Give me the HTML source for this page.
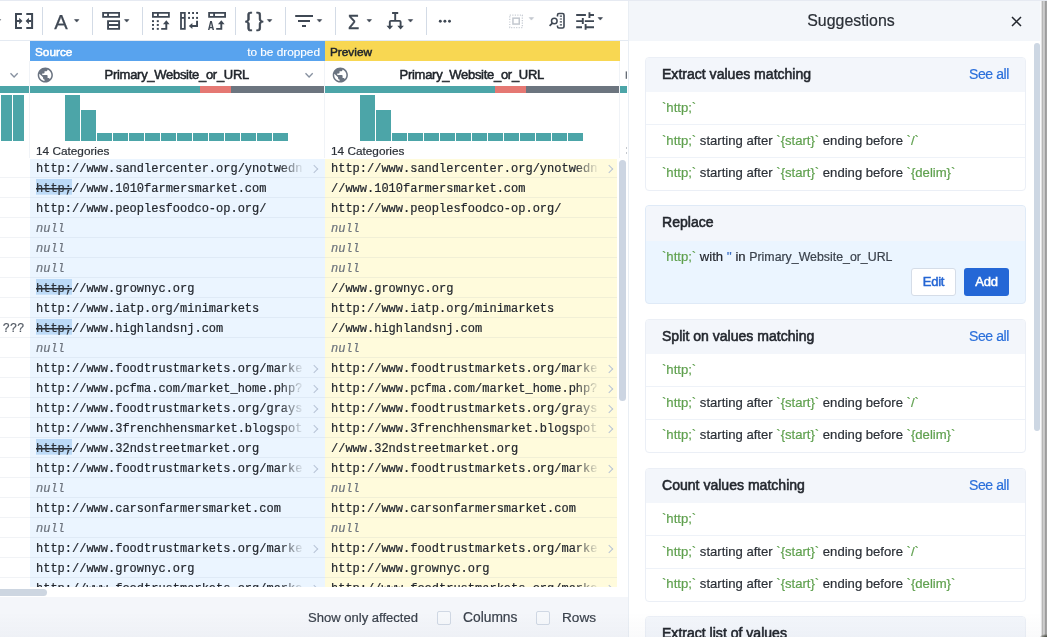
<!DOCTYPE html>
<html lang="en">
<head>
<meta charset="utf-8">
<title>Suggestions</title>
<style>
*{box-sizing:border-box;margin:0;padding:0}
html,body{width:1047px;height:637px;overflow:hidden;background:#fff}
body{position:relative;font-family:"Liberation Sans",sans-serif;color:#2b3037;-webkit-font-smoothing:antialiased}
.abs{position:absolute}
#left,#right{will-change:transform}
#left{position:absolute;left:0;top:0;width:628px;height:637px;overflow:hidden;background:#fff}
#topline{position:absolute;left:0;top:0;width:1047px;height:1px;background:#e6eaf2;z-index:5}
#toolbar{position:absolute;left:0;top:0;width:628px;height:41px;background:#fff;border-bottom:1px solid #e4eaf2}
.sep{position:absolute;top:7px;width:1px;height:28px;background:#d3dbe6}
.ico{position:absolute;overflow:visible}
.caret{position:absolute;width:0;height:0;border-left:2.8px solid transparent;border-right:2.8px solid transparent;border-top:3.2px solid #39424e}
.caret.gray{border-top-color:#c3c8cf}
.tb-t{position:absolute;color:#3f4854;white-space:nowrap}
/* header bands */
.band{position:absolute;top:41px;height:20px;font-size:11.8px;line-height:22px}
.band .l{-webkit-text-stroke:0.5px currentColor}
.band .r{-webkit-text-stroke:0.15px currentColor}
#bsrc{left:30px;width:295px;background:#58a3ee;color:#fff}
#bprv{left:325px;width:295px;background:#f8d752;color:#20252b}
.band .r{position:absolute;right:5px;top:0;font-weight:normal}
.band .l{position:absolute;left:5px;top:0}
/* column header */
.colname{position:absolute;top:61px;height:26px;line-height:28px;font-size:13px;letter-spacing:-0.29px;-webkit-text-stroke:0.5px currentColor;color:#20252b;text-align:center}
.vline{position:absolute;width:1px;background:#f0f3f7}
.qbar{position:absolute;top:86.3px;height:6.5px}
.bar{position:absolute;background:#4ca5a8}
.histo{position:absolute;top:95px;height:46px}
.cats{position:absolute;top:144px;font-size:11.8px;line-height:14px;color:#2b3037;-webkit-text-stroke:0.2px currentColor}
/* rows */
.col{position:absolute;top:158px;height:429px;overflow:hidden}
.cell{position:relative;height:20px;border-bottom:1px solid rgba(120,140,170,0.10);font-family:"Liberation Mono",monospace;font-size:12px;line-height:23px;white-space:nowrap;overflow:hidden;color:#23272e;padding-left:6px;-webkit-text-stroke:0.2px currentColor}
#csrc{left:30px;width:295px;background:#ebf5ff}
#cprv{left:325px;width:292px;background:#fffbdc}
#cleft{left:0;width:30px;background:#fff}
.cell.lc{padding-left:0;text-indent:-4.4px;color:#555c66}
.null{font-style:italic;color:#6c737d}
.tx{display:inline-block}
.tx.tr{max-width:266.4px;overflow:hidden;vertical-align:top}
.hl{color:#2b3037;padding-top:3.4px;background:linear-gradient(#2b3037,#2b3037) no-repeat 0 9.1px / 100% 1.5px,linear-gradient(#bcdaf7,#bcdaf7) no-repeat 0 0 / 100% 15.7px}
.hl s{text-decoration:none}
.fade{position:absolute;left:250px;top:0;width:23px;height:19px}
#rowtop{position:absolute;left:0;top:158px;width:628px;height:1px;background:#fff}
#csrc .fade{background:linear-gradient(to right,rgba(235,245,255,0),rgba(235,245,255,0.95))}
#cprv .fade{background:linear-gradient(to right,rgba(255,251,220,0),rgba(255,251,220,0.95))}
.chev{position:absolute;left:280.6px;top:8px;width:6.2px;height:6.2px;border-top:1.5px solid #b7c3d6;border-right:1.5px solid #b7c3d6;transform:rotate(45deg)}
/* bottom */
#hscroll{position:absolute;left:0;top:586.7px;width:628px;height:10px;background:#fff}
#hthumb{position:absolute;left:0;top:588.7px;width:47px;height:7.2px;border-radius:0 4px 4px 0;background:#cdd6e1}
#bottom{position:absolute;left:0;top:596.7px;width:628px;height:41px;background:#f4f6fa}
#bottom span{position:absolute;top:0;line-height:41px;font-size:13.05px;color:#3b424c;-webkit-text-stroke:0.2px currentColor}
.cb{position:absolute;top:611px;width:14px;height:14px;border:1px solid #d0d8e4;border-radius:2px;background:#f6f8fb}
#vthumb{position:absolute;left:619px;top:160px;width:7px;height:241px;border-radius:4px;background:#ccd5e2}
/* right panel */
#right{position:absolute;left:628px;top:0;width:419px;height:637px;background:#fff;border-left:1px solid #e9eef4;overflow:hidden}
#rhead{position:absolute;left:0;top:0;width:419px;height:41px;background:#f3f6fa}
#rhead .t{position:absolute;left:0;width:444px;top:0;line-height:41px;text-align:center;font-size:15.9px;color:#2b3037;-webkit-text-stroke:0.2px currentColor}
.card{position:absolute;left:16px;width:381px;height:134px;border:1px solid #ebeff6;border-radius:4px;background:#fff;overflow:hidden}
.chead{height:34px;background:#f3f6fb;position:relative}
.ctitle{position:absolute;left:16px;top:0;line-height:33px;font-size:14.05px;-webkit-text-stroke:0.55px currentColor;color:#23272e}
.seeall{position:absolute;right:16px;top:0;line-height:32px;font-size:14px;letter-spacing:-0.4px;color:#2a6fdb;-webkit-text-stroke:0.2px currentColor}
.crow{height:33px;line-height:32px;padding-left:16px;font-size:13.1px;color:#2b3037;border-top:1px solid #eef2f8;white-space:nowrap;-webkit-text-stroke:0.2px currentColor}
.crow:nth-child(2){border-top:none;height:32px}
.crow:nth-child(3){line-height:31px}
.crow:nth-child(4){line-height:30px}
.g{color:#5fa04e}
.btn{position:absolute;top:62px;height:28px;width:45px;border-radius:3px;font-size:13px;letter-spacing:-0.25px;-webkit-text-stroke:0.5px currentColor;line-height:25px;text-align:center}
#rthumb{position:absolute;left:405px;top:43px;width:6px;height:388px;border-radius:4px;background:#cdd7e3}
#redge{position:absolute;left:1040px;top:0;width:7px;height:637px;background:linear-gradient(to right,#f9fafc 0,#f9fafc 1px,#e0e0e0 1px,#e0e0e0 2px,#b6b6b6 2px,#b6b6b6 3px,#cdcdcd 3px,#cdcdcd 4px,#c6c6c6 4px,#c6c6c6 5px,#9c9c9c 5px,#9c9c9c 6px,#a4a4a4 6px)}
#botfade{position:absolute;left:0;top:612px;width:1042px;height:25px;background:linear-gradient(to bottom,rgba(20,40,80,0),rgba(20,40,80,0.022))}
#corner{position:absolute;left:1040px;top:633.5px;width:7px;height:3.5px;background:radial-gradient(ellipse at 100% 100%,#3e4238 0,#6f716a 35%,rgba(170,170,170,0) 75%)}
</style>
</head>
<body>
<div id="left">
  <div id="toolbar">
    <svg class="ico" style="left:0;top:0" width="628" height="41" viewBox="0 0 628 41" fill="none" stroke="#3f4854" stroke-width="2">
  <!-- merge -->
  <path d="M21.9 14 H16 V28 H21.9 M26.3 14 H32.1 V28 H26.3" stroke-width="2"/>
  <path d="M16.8 21 H19.8 M31.2 21 H28.4" stroke-width="1.9"/>
  <path d="M19.2 17.7 L22.5 21 L19.2 24.3 Z M28.9 17.7 L25.6 21 L28.9 24.3 Z" fill="#3f4854" stroke="none"/>
  <!-- table dropdown -->
  <path d="M103.1 12.9 H119.1 V16.9 H103.1 Z M108.05 12.9 V16.9" stroke-width="1.8"/>
  <path d="M108.05 21.1 H119.1 V28.9 H108.05 Z M108 25 H119" stroke-width="1.9"/>
  <!-- icon 1: header + dots + arrow -->
  <path d="M152.9 12.9 H168.9 V16.9 H152.9 Z M157.9 12.9 V16.9" stroke-width="1.8"/>
  <g fill="#3f4854" stroke="none">
    <rect x="152" y="20.2" width="2" height="1.9"/><rect x="156.8" y="20.2" width="2" height="1.9"/>
    <rect x="152" y="24" width="2" height="1.9"/><rect x="156.8" y="24" width="2" height="1.9"/>
    <rect x="152" y="27.9" width="2" height="1.9"/><rect x="156.8" y="27.9" width="2" height="1.9"/>
  </g>
  <path d="M161.2 28.9 H166.3 V23" stroke-width="1.9"/>
  <path d="M163 24.2 L166.3 20.3 L169.6 24.2 Z" fill="#3f4854" stroke="none"/>
  <!-- icon 2: column + dots + return -->
  <path d="M181 12.9 H184.8 V28.9 H181 Z M181 17.8 H184.8" stroke-width="1.8"/>
  <g fill="#3f4854" stroke="none">
    <rect x="188.1" y="12" width="1.9" height="2"/><rect x="192.1" y="12" width="1.9" height="2"/><rect x="196.1" y="12" width="1.9" height="2"/>
    <rect x="188.1" y="16.9" width="1.9" height="2"/><rect x="192.1" y="16.9" width="1.9" height="2"/><rect x="196.1" y="16.9" width="1.9" height="2"/>
  </g>
  <path d="M197.05 20.8 V26 H191.6" stroke-width="1.9"/>
  <path d="M192.4 22.9 L188.8 26 L192.4 29.1 Z" fill="#3f4854" stroke="none"/>
  <!-- icon 3: header + A + arrow -->
  <path d="M209.1 12.9 H225.1 V16.9 H209.1 Z M214.1 12.9 V16.9" stroke-width="1.8"/>
  <path d="M216.2 28.9 H221.3 V23" stroke-width="1.9"/>
  <path d="M218 24.2 L221.3 20.3 L224.6 24.2 Z" fill="#3f4854" stroke="none"/>
  <!-- filter -->
  <path d="M295.2 16 H313 M298 21 H310 M302 26 H306" stroke-width="2"/>
  <!-- pivot -->
  <path d="M392.1 13 H398.2 M395.2 13 V20.9 M389.8 27 V22 Q389.8 20.9 390.9 20.9 H399.5 Q400.6 20.9 400.6 22 V27" stroke-width="1.9"/>
  <path d="M386.5 25.7 H393.1 L389.8 29.5 Z M397.3 25.7 H403.9 L400.6 29.5 Z" fill="#3f4854" stroke="none"/>
  <!-- dots -->
  <g fill="#3f4854" stroke="none"><circle cx="440.3" cy="21.3" r="1.45"/><circle cx="444.9" cy="21.3" r="1.45"/><circle cx="449.5" cy="21.3" r="1.45"/></g>
  <!-- dotted square (disabled) -->
  <rect x="509.75" y="15.05" width="12.6" height="12.5" stroke="#c9ced5" stroke-width="1.3" stroke-dasharray="1.2 1.31"/>
  <rect x="512.95" y="18.15" width="6.3" height="5.9" stroke="#c3c8cf" stroke-width="1.5"/>
  <!-- search doc -->
  <path d="M557.5 16.5 V15 Q557.5 13.5 559 13.5 H562.5 Q564 13.5 564 15 V26.5 Q564 28 562.5 28 H559 Q557.5 28 557.5 26.5 V25.4" stroke-width="1.6"/>
  <path d="M559.8 16.1 H562 M559.8 19 H562 M559.8 21.9 H562 M559.8 24.8 H562" stroke-width="1.2"/>
  <circle cx="554.3" cy="21" r="2.8" stroke-width="1.5" fill="#fff"/>
  <path d="M552.4 23.1 L549.6 25.9" stroke-width="1.7"/>
  <!-- sliders -->
  <path d="M576.2 15.05 H585.9 M589.45 12.2 V18 M590 15.05 H594" stroke-width="1.9"/>
  <path d="M576.2 21.1 H582 M582.8 18.1 V24.1 M584.8 21.1 H594" stroke-width="1.9"/>
  <path d="M576.2 27.2 H582 M585.6 24.1 V29.7 M586.4 27.2 H594" stroke-width="1.9"/>
  <!-- carets -->
  <g fill="#3f4854" stroke="#3f4854" stroke-width="0.6" stroke-linejoin="round">
    <path d="M-3.8 19.6 H0.6 L-1.6 22.1 Z"/>
    <path d="M74.5 19.6 H78.9 L76.7 22.1 Z"/>
    <path d="M124.5 19.6 H128.9 L126.7 22.1 Z"/>
    <path d="M267.4 19.6 H271.8 L269.6 22.1 Z"/>
    <path d="M317.3 19.6 H321.7 L319.5 22.1 Z"/>
    <path d="M367.1 19.6 H371.5 L369.3 22.1 Z"/>
    <path d="M408.3 19.6 H412.7 L410.5 22.1 Z"/>
    <path d="M598.1 17.6 H602.5 L600.3 20.1 Z"/>
  </g>
  <path d="M529.2 17.6 H533.6 L531.4 20.1 Z" fill="#c3c8cf" stroke="#c3c8cf" stroke-width="0.6" stroke-linejoin="round"/>
</svg>
<span class="tb-t" style="left:54.2px;top:10.6px;font-size:20.2px;line-height:22px;-webkit-text-stroke:0.25px #3f4854">A</span>
<span class="tb-t" style="left:208.1px;top:20.6px;font-size:12px;line-height:12px;font-weight:bold;font-family:'Liberation Mono',monospace;transform:scaleX(0.84);transform-origin:0 0">A</span>
<span class="tb-t" style="left:244.8px;top:9px;font-size:19.7px;line-height:22px;-webkit-text-stroke:0.45px #3f4854;letter-spacing:3.6px;transform:scaleX(1.1);transform-origin:0 0">{}</span>
<span class="tb-t" style="left:348.3px;top:11.6px;font-size:19.3px;line-height:22px;-webkit-text-stroke:0.5px #3f4854;transform:scaleX(0.93);transform-origin:0 0">Σ</span>
<div class="sep" style="left:42px"></div>
<div class="sep" style="left:92px"></div>
<div class="sep" style="left:142px"></div>
<div class="sep" style="left:235px"></div>
<div class="sep" style="left:285px"></div>
<div class="sep" style="left:335px"></div>
<div class="sep" style="left:426px"></div>

  </div>

  <div class="band" id="bsrc"><span class="l">Source</span><span class="r">to be dropped</span></div>
  <div class="band" id="bprv"><span class="l">Preview</span></div>

  <!-- column name row -->
  <div class="colname" style="left:29.3px;width:295px">Primary_Website_or_URL</div>
  <div class="colname" style="left:324.3px;width:295px">Primary_Website_or_URL</div>
  <svg class="ico" style="left:0;top:61px" width="628" height="26" viewBox="0 0 628 26" fill="none">
  <path d="M10.5 12.3 L14.1 16 L17.7 12.3" stroke="#8791a0" stroke-width="1.35"/>
  <path d="M305.5 12.3 L309.1 16 L312.7 12.3" stroke="#8791a0" stroke-width="1.35"/>
  <path transform="translate(36.18 4.9) scale(0.76)" fill="#6a7380" d="M12 2C6.48 2 2 6.48 2 12s4.48 10 10 10 10-4.48 10-10S17.52 2 12 2zm-1 17.93c-3.95-.49-7-3.85-7-7.93 0-.62.08-1.21.21-1.79L9 15v1c0 1.1.9 2 2 2v1.93zm6.9-2.54c-.26-.81-1-1.39-1.9-1.39h-1v-3c0-.55-.45-1-1-1H8v-2h2c.55 0 1-.45 1-1V7h2c1.1 0 2-.9 2-2v-.41c2.93 1.19 5 4.06 5 7.41 0 2.08-.8 3.97-2.1 5.39z"/>
  <path transform="translate(331.18 4.9) scale(0.76)" fill="#6a7380" d="M12 2C6.48 2 2 6.48 2 12s4.48 10 10 10 10-4.48 10-10S17.52 2 12 2zm-1 17.93c-3.95-.49-7-3.85-7-7.93 0-.62.08-1.21.21-1.79L9 15v1c0 1.1.9 2 2 2v1.93zm6.9-2.54c-.26-.81-1-1.39-1.9-1.39h-1v-3c0-.55-.45-1-1-1H8v-2h2c.55 0 1-.45 1-1V7h2c1.1 0 2-.9 2-2v-.41c2.93 1.19 5 4.06 5 7.41 0 2.08-.8 3.97-2.1 5.39z"/>
  <rect x="625.7" y="10.4" width="1.2" height="7.4" fill="#555c66"/>
  <rect x="626" y="86.5" width="1" height="1" fill="#8a919b"/><rect x="626" y="91.5" width="1" height="1" fill="#8a919b"/>
</svg>


  <!-- quality bars -->
  <div class="qbar" style="left:0;width:29px;background:#4ca5a8"></div>
  <div class="qbar" style="left:30px;width:170px;background:#4ca5a8"></div>
  <div class="qbar" style="left:200px;width:31px;background:#e57873"></div>
  <div class="qbar" style="left:231px;width:93px;background:#6c757f"></div>
  <div class="qbar" style="left:325px;width:170px;background:#4ca5a8"></div>
  <div class="qbar" style="left:495px;width:31px;background:#e57873"></div>
  <div class="qbar" style="left:526px;width:93px;background:#6c757f"></div>
  <div class="qbar" style="left:620px;width:7px;background:#4ca5a8"></div>

  <!-- histograms -->
  <div class="histo" style="left:0;width:30px">
    <div class="bar" style="left:1.4px;width:10.5px;top:0;height:46px"></div>
    <div class="bar" style="left:13.4px;width:10.7px;top:0;height:46px"></div>
  </div>
  <div class="histo" style="left:30px;width:295px">
<div class="bar" style="left:35px;width:15px;top:0;height:46px"></div>
<div class="bar" style="left:51px;width:15px;top:15px;height:31px"></div>
<div class="bar" style="left:67px;width:15px;top:38px;height:8px"></div>
<div class="bar" style="left:83px;width:15px;top:38px;height:8px"></div>
<div class="bar" style="left:99px;width:15px;top:38px;height:8px"></div>
<div class="bar" style="left:115px;width:15px;top:38px;height:8px"></div>
<div class="bar" style="left:131px;width:15px;top:38px;height:8px"></div>
<div class="bar" style="left:147px;width:15px;top:38px;height:8px"></div>
<div class="bar" style="left:163px;width:15px;top:38px;height:8px"></div>
<div class="bar" style="left:179px;width:15px;top:38px;height:8px"></div>
<div class="bar" style="left:195px;width:15px;top:38px;height:8px"></div>
<div class="bar" style="left:211px;width:15px;top:38px;height:8px"></div>
<div class="bar" style="left:227px;width:15px;top:38px;height:8px"></div>
<div class="bar" style="left:243px;width:15px;top:38px;height:8px"></div>
  </div>
  <div class="histo" style="left:325px;width:295px">
<div class="bar" style="left:35px;width:15px;top:0;height:46px"></div>
<div class="bar" style="left:51px;width:15px;top:15px;height:31px"></div>
<div class="bar" style="left:67px;width:15px;top:38px;height:8px"></div>
<div class="bar" style="left:83px;width:15px;top:38px;height:8px"></div>
<div class="bar" style="left:99px;width:15px;top:38px;height:8px"></div>
<div class="bar" style="left:115px;width:15px;top:38px;height:8px"></div>
<div class="bar" style="left:131px;width:15px;top:38px;height:8px"></div>
<div class="bar" style="left:147px;width:15px;top:38px;height:8px"></div>
<div class="bar" style="left:163px;width:15px;top:38px;height:8px"></div>
<div class="bar" style="left:179px;width:15px;top:38px;height:8px"></div>
<div class="bar" style="left:195px;width:15px;top:38px;height:8px"></div>
<div class="bar" style="left:211px;width:15px;top:38px;height:8px"></div>
<div class="bar" style="left:227px;width:15px;top:38px;height:8px"></div>
<div class="bar" style="left:243px;width:15px;top:38px;height:8px"></div>
  </div>
  <div class="cats" style="left:36px">14 Categories</div>
  <div class="cats" style="left:331px">14 Categories</div>

  <!-- column borders -->
  <div class="vline" style="left:29px;top:61px;height:97px"></div>
  <div class="vline" style="left:324px;top:61px;height:97px"></div>
  <div class="vline" style="left:619px;top:61px;height:97px"></div>

  <div class="col" id="cleft">
<div class="cell lc"></div>
<div class="cell lc"></div>
<div class="cell lc"></div>
<div class="cell lc"></div>
<div class="cell lc"></div>
<div class="cell lc"></div>
<div class="cell lc"></div>
<div class="cell lc"></div>
<div class="cell lc">:???</div>
<div class="cell lc"></div>
<div class="cell lc"></div>
<div class="cell lc"></div>
<div class="cell lc"></div>
<div class="cell lc"></div>
<div class="cell lc"></div>
<div class="cell lc"></div>
<div class="cell lc"></div>
<div class="cell lc"></div>
<div class="cell lc"></div>
<div class="cell lc"></div>
<div class="cell lc"></div>
<div class="cell lc"></div>
  </div>
  <div class="col" id="csrc">
<div class="cell"><span class="tx tr">http://www.sandlercenter.org/ynotwednesdays</span><span class="fade"></span><span class="chev"></span></div>
<div class="cell"><span class="tx"><span class="hl"><s>http;</s></span>//www.1010farmersmarket.com</span></div>
<div class="cell"><span class="tx">http://www.peoplesfoodco-op.org/</span></div>
<div class="cell"><span class="null">null</span></div>
<div class="cell"><span class="null">null</span></div>
<div class="cell"><span class="null">null</span></div>
<div class="cell"><span class="tx"><span class="hl"><s>http;</s></span>//www.grownyc.org</span></div>
<div class="cell"><span class="tx">http://www.iatp.org/minimarkets</span></div>
<div class="cell"><span class="tx"><span class="hl"><s>http;</s></span>//www.highlandsnj.com</span></div>
<div class="cell"><span class="null">null</span></div>
<div class="cell"><span class="tx tr">http://www.foodtrustmarkets.org/markets</span><span class="fade"></span><span class="chev"></span></div>
<div class="cell"><span class="tx tr">http://www.pcfma.com/market_home.php?market_id=1</span><span class="fade"></span><span class="chev"></span></div>
<div class="cell"><span class="tx tr">http://www.foodtrustmarkets.org/graysferry</span><span class="fade"></span><span class="chev"></span></div>
<div class="cell"><span class="tx tr">http://www.3frenchhensmarket.blogspot.com</span><span class="fade"></span><span class="chev"></span></div>
<div class="cell"><span class="tx"><span class="hl"><s>http;</s></span>//www.32ndstreetmarket.org</span></div>
<div class="cell"><span class="tx tr">http://www.foodtrustmarkets.org/markets</span><span class="fade"></span><span class="chev"></span></div>
<div class="cell"><span class="null">null</span></div>
<div class="cell"><span class="tx">http://www.carsonfarmersmarket.com</span></div>
<div class="cell"><span class="null">null</span></div>
<div class="cell"><span class="tx tr">http://www.foodtrustmarkets.org/markets</span><span class="fade"></span><span class="chev"></span></div>
<div class="cell"><span class="tx">http://www.grownyc.org</span></div>
<div class="cell"><span class="tx tr">http://www.foodtrustmarkets.org/markets</span><span class="fade"></span><span class="chev"></span></div>
  </div>
  <div class="col" id="cprv">
<div class="cell"><span class="tx tr">http://www.sandlercenter.org/ynotwednesdays</span><span class="fade"></span><span class="chev"></span></div>
<div class="cell"><span class="tx">//www.1010farmersmarket.com</span></div>
<div class="cell"><span class="tx">http://www.peoplesfoodco-op.org/</span></div>
<div class="cell"><span class="null">null</span></div>
<div class="cell"><span class="null">null</span></div>
<div class="cell"><span class="null">null</span></div>
<div class="cell"><span class="tx">//www.grownyc.org</span></div>
<div class="cell"><span class="tx">http://www.iatp.org/minimarkets</span></div>
<div class="cell"><span class="tx">//www.highlandsnj.com</span></div>
<div class="cell"><span class="null">null</span></div>
<div class="cell"><span class="tx tr">http://www.foodtrustmarkets.org/markets</span><span class="fade"></span><span class="chev"></span></div>
<div class="cell"><span class="tx tr">http://www.pcfma.com/market_home.php?market_id=1</span><span class="fade"></span><span class="chev"></span></div>
<div class="cell"><span class="tx tr">http://www.foodtrustmarkets.org/graysferry</span><span class="fade"></span><span class="chev"></span></div>
<div class="cell"><span class="tx tr">http://www.3frenchhensmarket.blogspot.com</span><span class="fade"></span><span class="chev"></span></div>
<div class="cell"><span class="tx">//www.32ndstreetmarket.org</span></div>
<div class="cell"><span class="tx tr">http://www.foodtrustmarkets.org/markets</span><span class="fade"></span><span class="chev"></span></div>
<div class="cell"><span class="null">null</span></div>
<div class="cell"><span class="tx">http://www.carsonfarmersmarket.com</span></div>
<div class="cell"><span class="null">null</span></div>
<div class="cell"><span class="tx tr">http://www.foodtrustmarkets.org/markets</span><span class="fade"></span><span class="chev"></span></div>
<div class="cell"><span class="tx">http://www.grownyc.org</span></div>
<div class="cell"><span class="tx tr">http://www.foodtrustmarkets.org/markets</span><span class="fade"></span><span class="chev"></span></div>
  </div>
  <div class="col" style="left:620px;width:8px;background:#fff"></div>
  <div id="rowtop"></div>
  <div id="vthumb"></div>

  <div id="hscroll"></div>
  <div id="hthumb"></div>
  <div id="bottom">
    <span style="left:308px">Show only affected</span>
    <span style="left:463px;font-size:13.8px;line-height:42.5px">Columns</span>
    <span style="left:562px;font-size:13.6px;line-height:42.5px">Rows</span>
  </div>
  <div class="cb" style="left:437px"></div>
  <div class="cb" style="left:536px"></div>
</div>

<div id="right">
  <div id="rhead"><div class="t">Suggestions</div>
    <svg class="ico" style="left:381.2px;top:14.8px" width="13" height="13" viewBox="0 0 13 13"><path d="M2 2 L11 11 M11 2 L2 11" stroke="#23272e" stroke-width="1.5" fill="none"/></svg>
  </div>
<div class="card" style="top:57px">
<div class="chead"><span class="ctitle">Extract values matching</span><span class="seeall">See all</span></div>
<div class="crow"><span class="g">`http;`</span></div>
<div class="crow"><span class="g">`http;`</span> starting after <span class="g">`{start}`</span> ending before <span class="g">`/`</span></div>
<div class="crow"><span class="g">`http;`</span> starting after <span class="g">`{start}`</span> ending before <span class="g">`{delim}`</span></div>
</div>
  <div class="card" style="top:205px;height:98.5px;background:#ebf5ff;border-color:#dfeaf7">
    <div class="chead" style="height:35px"><span class="ctitle">Replace</span></div>
    <div class="crow" style="border-top:none;color:#3b424c"><span class="g">`http;`</span> <span style="color:#23272e">with</span> <span class="g" style="color:#3a6fc4">''</span> <span style="color:#23272e">in</span> <span style="font-size:12.35px">Primary_Website_or_URL</span></div>
    <div class="btn" style="left:265px;background:#fff;border:1px solid #d5dde8;color:#2566d4">Edit</div>
    <div class="btn" style="left:318px;background:#2467d6;color:#fff;line-height:27px">Add</div>
  </div>
<div class="card" style="top:318.5px">
<div class="chead"><span class="ctitle">Split on values matching</span><span class="seeall">See all</span></div>
<div class="crow"><span class="g">`http;`</span></div>
<div class="crow"><span class="g">`http;`</span> starting after <span class="g">`{start}`</span> ending before <span class="g">`/`</span></div>
<div class="crow"><span class="g">`http;`</span> starting after <span class="g">`{start}`</span> ending before <span class="g">`{delim}`</span></div>
</div>
<div class="card" style="top:467.5px">
<div class="chead"><span class="ctitle">Count values matching</span><span class="seeall">See all</span></div>
<div class="crow"><span class="g">`http;`</span></div>
<div class="crow"><span class="g">`http;`</span> starting after <span class="g">`{start}`</span> ending before <span class="g">`/`</span></div>
<div class="crow"><span class="g">`http;`</span> starting after <span class="g">`{start}`</span> ending before <span class="g">`{delim}`</span></div>
</div>
  <div class="card" style="top:616px;height:60px">
    <div class="chead"><span class="ctitle">Extract list of values</span></div>
  </div>
  <div id="rthumb"></div>
</div>
<div id="topline"></div>
<div id="botfade"></div>
<div id="redge"></div>
<div id="corner"></div>
</body>
</html>
